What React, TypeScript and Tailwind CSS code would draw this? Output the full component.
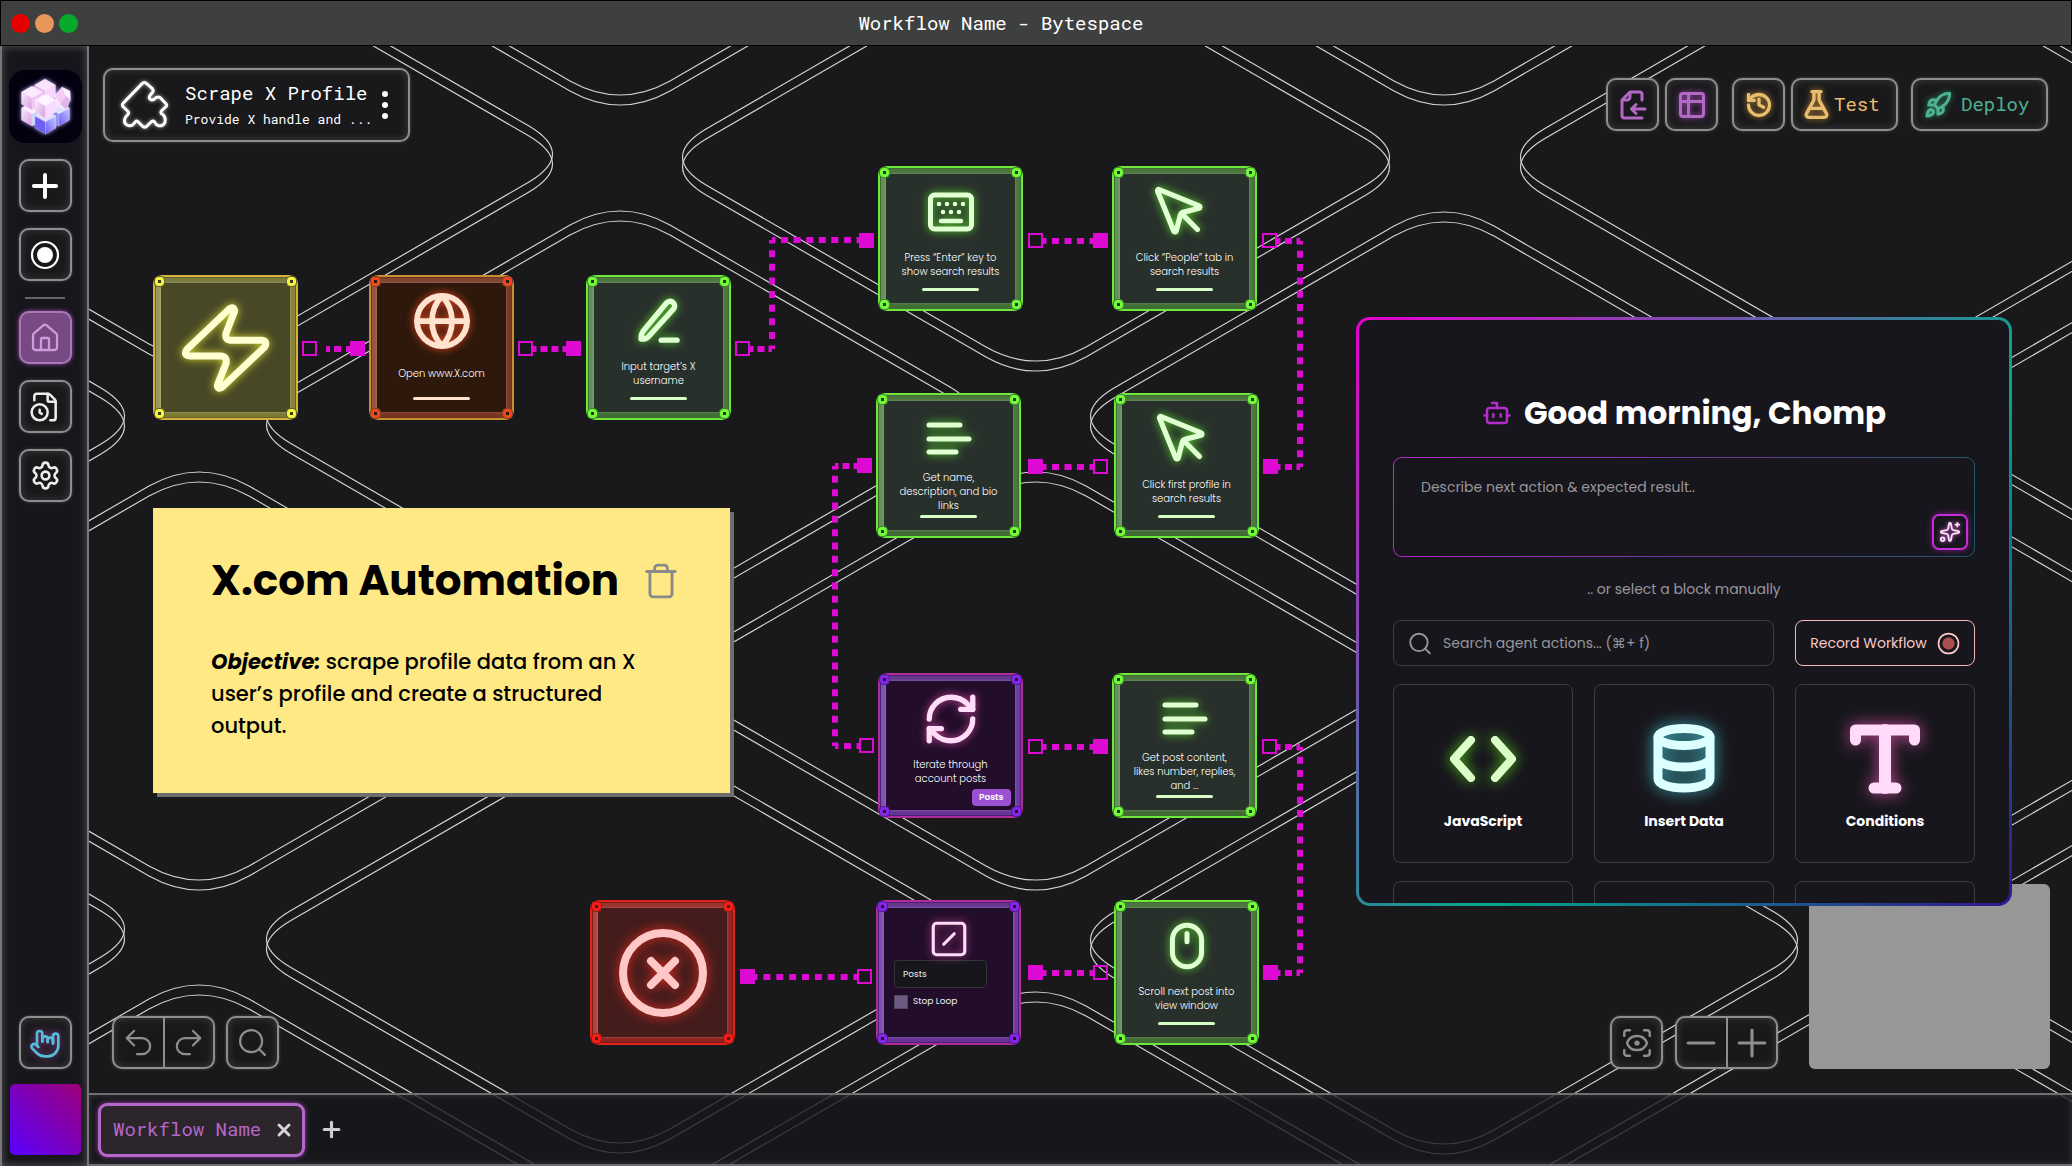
import type { ReactNode } from "react";
import {
  Bot,
  CircleX,
  FileClock,
  FlaskConical,
  Globe,
  HandMetal,
  History,
  House,
  Mouse,
  MousePointer,
  Plus,
  Minus,
  Redo2,
  RefreshCw,
  Rocket,
  ScanEye,
  Search,
  Settings,
  Sparkles,
  SquareSlash,
  Trash,
  Undo2,
  X,
} from "lucide-react";

const MONO = "font-['Roboto_Mono','DejaVu_Sans_Mono',monospace]";
const FRAME =
  "border-2 border-[#8e8e8e] rounded-[10px] bg-[#19191b] shadow-[0_0_3px_rgba(255,255,255,0.25),inset_0_0_8px_rgba(255,255,255,0.16)]";

/* ---------- background pattern ---------- */

const ROUNDED_RHOMBUS =
  "M-50-190Q0-218 50-190L330-28Q377 0 330 28L50 190Q0 218-50 190L-330 28Q-377 0-330-28Z";

const RHOMBI: [number, number][] = [
  [-318, 370], [-318, 883],
  [110, 108], [110, 630], [110, 1143],
  [531, -155], [531, 369], [531, 893],
  [947, 111], [947, 630], [947, 1150],
  [1355, -155], [1355, 370], [1355, 894],
  [1785, 111], [1785, 630], [1785, 1150],
  [2200, 370], [2200, 893],
];

function Backdrop() {
  return (
    <svg className="absolute inset-0 size-full" fill="none" stroke="#d2d2d2" strokeWidth="1.2" aria-hidden="true">
      {RHOMBI.map(([x, y]) => (
        <g key={`${x},${y}`}>
          <path d={ROUNDED_RHOMBUS} transform={`translate(${x} ${y})`} />
          <path d={ROUNDED_RHOMBUS} transform={`translate(${x} ${y + 10})`} />
        </g>
      ))}
    </svg>
  );
}

/* ---------- connectors ---------- */

// x1, y1, x2, y2, number of dash intervals
const SEGMENTS: [number, number, number, number, number][] = [
  [444, 303, 477, 303, 3],
  [661, 303, 683, 303, 2],
  [683, 303, 683, 194, 8],
  [683, 194, 771, 194, 7],
  [954, 195, 1004, 195, 4],
  [1188, 195, 1211, 195, 2],
  [1211, 195, 1211, 421, 17],
  [1211, 421, 1188, 421, 2],
  [954, 421, 1004, 421, 4],
  [768, 420, 746, 420, 2],
  [746, 420, 746, 700, 21],
  [746, 700, 771, 700, 2],
  [954, 701, 1004, 701, 4],
  [1188, 701, 1211, 701, 2],
  [1211, 701, 1211, 927, 17],
  [1211, 927, 1188, 927, 2],
  [954, 927, 1004, 927, 4],
  [665, 931, 768, 931, 8],
];

const PORTS: { x: number; y: number; filled?: boolean }[] = [
  { x: 221, y: 303 }, { x: 269, y: 303, filled: true },
  { x: 437, y: 303 }, { x: 485, y: 303, filled: true },
  { x: 654, y: 303 }, { x: 778, y: 195, filled: true },
  { x: 947, y: 195 }, { x: 1012, y: 195, filled: true },
  { x: 1181, y: 195 }, { x: 1182, y: 421, filled: true },
  { x: 1012, y: 421 }, { x: 947, y: 421, filled: true },
  { x: 776, y: 420, filled: true }, { x: 778, y: 700 },
  { x: 947, y: 701 }, { x: 1012, y: 701, filled: true },
  { x: 1181, y: 701 }, { x: 1182, y: 927, filled: true },
  { x: 1012, y: 927 }, { x: 947, y: 927, filled: true },
  { x: 776, y: 931 }, { x: 659, y: 931, filled: true },
];

function Connectors() {
  return (
    <svg className="absolute inset-0 size-full" fill="none" stroke="#dc0ad2" aria-hidden="true">
      {SEGMENTS.map(([x1, y1, x2, y2, n]) => {
        const pitch = (Math.abs(x2 - x1) + Math.abs(y2 - y1)) / n;
        return (
          <line
            key={`${x1},${y1},${x2},${y2}`}
            x1={x1}
            y1={y1}
            x2={x2}
            y2={y2}
            strokeWidth="6"
            strokeDasharray={`7 ${pitch - 7}`}
            strokeDashoffset="3.5"
          />
        );
      })}
      <path d="M237 303h4M245 303h7M257 303h5" strokeWidth="6" />
      {PORTS.map(({ x, y, filled }) => (
        <rect
          key={`${x},${y}`}
          x={x - 7}
          y={y - 7}
          width="13"
          height="13"
          strokeWidth="2"
          fill={filled ? "#dc0ad2" : "none"}
        />
      ))}
    </svg>
  );
}

/* ---------- workflow nodes ---------- */

type Tone = "yellow" | "orange" | "green" | "purple" | "red";

const TONES: Record<Tone, { edge: string; bevel: string; face: string; rivet: string; icon: string; bar: string }> = {
  yellow: {
    edge: "border-[#d6b23c] bg-[#66642c]",
    bevel: "border-t-[#7c7b3f] border-r-[#85843c] border-b-[#7c7b35] border-l-[#9a995c]",
    face: "bg-[#484826]",
    rivet: "border-[#f6f542] bg-[#3c3c1e] outline-[#66642c]",
    icon: "text-[#ffffd2] drop-shadow-[0_0_4px_#d8d832]",
    bar: "bg-[#ffffd2]",
  },
  orange: {
    edge: "border-[#c98f2d] bg-[#6b3322]",
    bevel: "border-t-[#7f4532] border-r-[#7a3826] border-b-[#7a3521] border-l-[#96553f]",
    face: "bg-[#2d180b]",
    rivet: "border-[#ec4a1c] bg-[#2d180b] outline-[#8a3f22]",
    icon: "text-[#ffe3cf] drop-shadow-[0_0_4px_#dd4420]",
    bar: "bg-[#ffe3cf]",
  },
  green: {
    edge: "border-[#6fe83c] bg-[#3f6a33]",
    bevel: "border-t-[#4d7540] border-r-[#4a773c] border-b-[#416d35] border-l-[#649159]",
    face: "bg-[#28302b]",
    rivet: "border-[#72fb3a] bg-[#28302b] outline-[#438a2c]",
    icon: "text-[#e0ffd2] drop-shadow-[0_0_4px_#58d02c]",
    bar: "bg-[#d9ffc8]",
  },
  purple: {
    edge: "border-[#b12a9e] bg-[#4c2270]",
    bevel: "border-t-[#66388d] border-r-[#6f3aa6] border-b-[#653494] border-l-[#8250b4]",
    face: "bg-[#220d2a]",
    rivet: "border-[#8426e8] bg-[#220d2a] outline-[#4f1c96]",
    icon: "text-[#ffdcf8] drop-shadow-[0_0_4px_#c04596]",
    bar: "bg-[#ffdcf8]",
  },
  red: {
    edge: "border-[#e3231c] bg-[#7a1d1a]",
    bevel: "border-t-[#9b332e] border-r-[#932621] border-b-[#8e241f] border-l-[#b3443e]",
    face: "bg-[#441c1b]",
    rivet: "border-[#f51f18] bg-[#441c1b] outline-[#991c18]",
    icon: "text-[#ffc8c6] drop-shadow-[0_0_6px_#e02a22]",
    bar: "bg-[#ffc8c6]",
  },
};

function Node({ tone, place, children }: { tone: Tone; place: string; children: ReactNode }) {
  const t = TONES[tone];
  const rivet = `absolute size-[9px] rounded-[3px] border-[3px] outline-1 ${t.rivet}`;
  return (
    <article className={`absolute size-[145px] rounded-[9px] border-2 p-px ${t.edge} ${place}`}>
      <div className={`size-full rounded-[6px] border-[5px] ${t.bevel}`}>
        <div className={`size-full rounded-[3px] shadow-[0_0_2px_1px_rgba(255,255,255,0.14)] ${t.face}`} />
      </div>
      <span className={`${rivet} top-0 left-0`} />
      <span className={`${rivet} top-0 right-0`} />
      <span className={`${rivet} bottom-0 left-0`} />
      <span className={`${rivet} right-0 bottom-0`} />
      <div className="absolute inset-0 flex flex-col items-center">{children}</div>
    </article>
  );
}

function Step({ tone, place, icon, lines, bar = true }: { tone: Tone; place: string; icon: ReactNode; lines: string[]; bar?: boolean }) {
  const t = TONES[tone];
  return (
    <Node tone={tone} place={place}>
      <div className={`mt-[14px] flex h-[60px] items-center justify-center ${t.icon}`}>{icon}</div>
      <p className="flex h-[46px] flex-col justify-center text-center text-[10px] leading-[14px] font-light whitespace-nowrap text-white">
        {lines.map((line) => (
          <span key={line}>{line}</span>
        ))}
      </p>
      {bar && <span className={`h-[3px] w-[57px] rounded-full ${t.bar}`} />}
    </Node>
  );
}

function BoltIcon() {
  return (
    <svg width="98" height="98" viewBox="530 894 294 294" fill="none" stroke="currentColor" strokeWidth="21" strokeLinejoin="round">
      <path d="M686 925L560 1045Q547 1063 569 1065L662 1065Q681 1067 677 1088L651 1153Q652 1167 666 1158L793 1038Q803 1020 784 1018L690 1018Q673 1016 677 997L703 930Q700 914 686 925Z" />
    </svg>
  );
}

function CursorIcon() {
  return <MousePointer size={60} strokeWidth={2.100} className="mr-[9px]" />;
}

function KeyboardIcon() {
  return (
    <svg width="48" height="42" viewBox="0 0 48 42" fill="none" stroke="currentColor" strokeLinecap="round">
      <rect x="3.5" y="4" width="41" height="34" rx="4" strokeWidth="5" />
      <path d="M12 13h.01M20 13h.01M28 13h.01M36 13h.01M16 21h.01M24 21h.01M32 21h.01" strokeWidth="4.600" />
      <path d="M14 30h20" strokeWidth="4.500" />
    </svg>
  );
}

function LinesIcon() {
  return (
    <svg width="48" height="36" viewBox="0 0 48 36" stroke="currentColor" strokeWidth="5" strokeLinecap="round">
      <path d="M4 4h31M4 18h40M4 31h27" />
    </svg>
  );
}

function PenIcon() {
  return (
    <svg width="54" height="54" viewBox="0 0 24 24" fill="none" stroke="currentColor" strokeWidth="2.400" strokeLinecap="round" strokeLinejoin="round">
      <path d="M13 20.500h7M15.300 4a2 2 0 0 1 3.200 2.600L7.500 18.800c-1 1-2.200 1.400-3.500 1.200 0-1.500.3-2.600 1-3.600Z" />
    </svg>
  );
}

/* ---------- drawings for bars ---------- */

function PuzzleIcon() {
  return (
    <svg width="54" height="54" viewBox="350 232 162 162" fill="none" stroke="#fff" strokeWidth="9" strokeLinejoin="round" className="drop-shadow-[0_0_2px_rgba(255,255,255,0.6)]">
      <path d="M438 248L456 264Q461 270 456 276Q445 287 447 293Q452 300 460 297L468 290Q474 287 480 291L497 309Q501 314 497 318L484 330Q479 336 485 340Q497 346 494 365Q488 378 474 375Q468 373 462 363Q457 358 452 364L439 377Q433 382 427 377L414 364Q408 358 404 365Q396 378 384 375Q370 371 373 356Q375 348 383 341Q387 336 382 331L368 318Q364 313 368 308L426 248Q432 243 438 248Z" />
    </svg>
  );
}

function Cube({ x, y, top, left, right }: { x: number; y: number; top: string; left: string; right: string }) {
  return (
    <g stroke="#fff" strokeOpacity="0.5" strokeWidth="0.4">
      <path d={`M${x} ${y - 6}l10.500 6l-10.500 6l-10.500-6z`} fill={top} />
      <path d={`M${x - 10.5} ${y}l10.500 6v12l-10.500-6z`} fill={left} />
      <path d={`M${x + 10.5} ${y}l-10.500 6v12l10.500-6z`} fill={right} />
    </g>
  );
}

function Logo() {
  return (
    <svg width="73" height="73" viewBox="0 0 73 73" className="drop-shadow-[0_0_2px_#b7a8ff]" aria-hidden="true">
      <defs>
        <linearGradient id="pinkFace" x1="0" y1="0" x2="1" y2="1">
          <stop offset="0" stopColor="#fdeaff" />
          <stop offset="1" stopColor="#d79be0" />
        </linearGradient>
        <linearGradient id="blueFace" x1="0" y1="1" x2="1" y2="0">
          <stop offset="0" stopColor="#6b5cf2" />
          <stop offset="1" stopColor="#c5cbff" />
        </linearGradient>
      </defs>
      <Cube x={50} y={38} top="#dfe2ff" left="#8e8df4" right="url(#blueFace)" />
      <Cube x={23} y={38} top="#fff0ff" left="url(#pinkFace)" right="#c9d4ff" />
      <Cube x={36} y={15} top="#fbe3fd" left="#e9b4ee" right="#f7d6fb" />
      <g stroke="#fff" strokeOpacity="0.6" strokeWidth="0.4">
        <path d="M53 17l-7 8 5 9 6-8z" fill="#f3cdf6" />
        <path d="M53 17l8 4 .5 9-4.500-4z" fill="#fdf0ff" />
        <path d="M57 26l4.500 4-4.500 10-6-6z" fill="#e3b4ea" />
        <path d="M46 25l5 9 6 6-10-4z" fill="#fae2fb" />
      </g>
      <Cube x={23} y={22} top="#fdeaff" left="url(#pinkFace)" right="#f0c6f5" />
      <Cube x={36.500} y={46} top="#e3ddff" left="#6e5ff5" right="url(#blueFace)" />
      <Cube x={36.500} y={30} top="#fff3ff" left="url(#pinkFace)" right="#f8daff" />
    </svg>
  );
}

function ImportFileIcon() {
  return (
    <svg width="28" height="30" viewBox="0 0 28 30" fill="none" stroke="currentColor" strokeWidth="3" strokeLinecap="round" strokeLinejoin="round">
      <path d="M23 10V4.500A2.500 2.500 0 0 0 20.500 2H11L3 10v15.500A2.500 2.500 0 0 0 5.500 28H23" />
      <path d="M11 2.500V7a3 3 0 0 1-3 3H3.500M26 19H13M17 14.500L12.500 19l4.500 4.500" />
    </svg>
  );
}

function TableIcon() {
  return (
    <svg width="28" height="28" viewBox="0 0 28 28" fill="none" stroke="currentColor" strokeWidth="3">
      <rect x="2.500" y="2.500" width="23" height="23" rx="2.500" />
      <path d="M2.500 10.500h23M10.500 2.500v23" />
    </svg>
  );
}

function RecordIcon({ size, inner }: { size: number; inner: string }) {
  return (
    <svg width={size} height={size} viewBox="0 0 30 30" fill="none" stroke="currentColor" strokeWidth="2.200" aria-hidden="true">
      <circle cx="15" cy="15" r="13" />
      <circle cx="15" cy="15" r="8" fill={inner} stroke="none" />
    </svg>
  );
}

function IconButton({ label, tone = "text-white", children }: { label: string; tone?: string; children: ReactNode }) {
  return (
    <button type="button" aria-label={label} className={`flex size-[53px] shrink-0 items-center justify-center ${FRAME} ${tone}`}>
      {children}
    </button>
  );
}

/* ---------- page regions ---------- */

function TitleBar() {
  return (
    <header className="relative flex h-[46px] shrink-0 items-center justify-center border border-black bg-[#3e403f] pr-[70px]">
      <div className="absolute left-[10px] flex gap-[5px]">
        <button type="button" aria-label="Close window" className="size-[19px] rounded-full bg-[#e80000]" />
        <button type="button" aria-label="Minimize window" className="size-[19px] rounded-full bg-[#e8965a]" />
        <button type="button" aria-label="Maximize window" className="size-[19px] rounded-full bg-[#08aa2c]" />
      </div>
      <h1 className={`${MONO} text-[19px] text-white`}>Workflow Name - Bytespace</h1>
    </header>
  );
}

function Sidebar() {
  return (
    <aside className="flex w-[89px] shrink-0 flex-col items-center border-x-2 border-[#77777a] bg-[#17161c] pt-6 pb-[11px] pl-px shadow-[inset_0_0_8px_rgba(255,255,255,0.28)]">
      <div className="rounded-2xl bg-[#03010f]">
        <Logo />
      </div>
      <nav aria-label="Main" className="mt-4 flex flex-col items-center gap-4">
        <IconButton label="Add">
          <Plus size={38} strokeWidth={2.500} />
        </IconButton>
        <IconButton label="Record">
          <RecordIcon size={30} inner="#fff" />
        </IconButton>
        <hr className="-mb-1 w-10 border-t-2 border-[#66666a]" />
        <button
          type="button"
          aria-label="Home"
          className="flex size-[53px] items-center justify-center rounded-[10px] border-2 border-[#a877b4] bg-[#784a85] text-[#d09adb] shadow-[0_0_4px_#a04fb4]"
        >
          <House size={32} strokeWidth={1.700} />
        </button>
        <IconButton label="Scheduled files" tone="text-[#ededed]">
          <FileClock size={32} strokeWidth={1.900} />
        </IconButton>
        <IconButton label="Settings" tone="text-[#ededed]">
          <Settings size={31} strokeWidth={2} />
        </IconButton>
      </nav>
      <div className="mt-auto flex flex-col items-center gap-[15px]">
        <IconButton label="Pan" tone="text-[#55bdd6]">
          <HandMetal size={32} strokeWidth={2} className="drop-shadow-[0_0_4px_#8a3fa0]" />
        </IconButton>
        <button type="button" aria-label="Account" className="size-[71px] rounded-[5px] bg-linear-[45deg,#5a00ff,#9c0078]" />
      </div>
    </aside>
  );
}

function InfoCard() {
  return (
    <section className={`absolute top-[22px] left-[14px] flex h-[74px] w-[307px] items-center px-5 pl-3 ${FRAME} ${MONO}`}>
      <PuzzleIcon />
      <div className="ml-[14px] text-white">
        <h2 className="text-[19px] leading-7 whitespace-nowrap">Scrape X Profile</h2>
        <p className="text-[13px] leading-6 whitespace-nowrap">Provide X handle and ...</p>
      </div>
      <button type="button" aria-label="More" className="ml-auto flex flex-col gap-[5px]">
        <span className="size-[6px] rounded-full bg-white" />
        <span className="size-[6px] rounded-full bg-white" />
        <span className="size-[6px] rounded-full bg-white" />
      </button>
    </section>
  );
}

function TopActions() {
  return (
    <div className={`absolute top-[32px] right-6 flex text-[19px] ${MONO}`}>
      <div className="flex gap-[6px]">
        <IconButton label="Import file" tone="text-[#b368c6]">
          <ImportFileIcon />
        </IconButton>
        <IconButton label="Table view" tone="text-[#b368c6]">
          <span className="drop-shadow-[0_0_3px_#9a45b0]">
            <TableIcon />
          </span>
        </IconButton>
      </div>
      <div className="mr-[13px] ml-[14px] flex gap-[6px] text-[#e9bd6f]">
        <IconButton label="History" tone="text-[#e9bd6f]">
          <History size={28} strokeWidth={2.800} className="drop-shadow-[0_0_3px_#b8873a]" />
        </IconButton>
        <button type="button" className={`flex h-[53px] w-[107px] items-center gap-[2px] pl-2 ${FRAME}`}>
          <FlaskConical size={31} strokeWidth={2.600} className="drop-shadow-[0_0_3px_#b8873a]" />
          Test
        </button>
      </div>
      <button type="button" className={`flex h-[53px] w-[137px] items-center gap-[9px] pl-[11px] text-[#4db292] ${FRAME}`}>
        <Rocket size={28} strokeWidth={2.600} className="drop-shadow-[0_0_3px_#2c7e62]" />
        Deploy
      </button>
    </div>
  );
}

function StickyNote() {
  return (
    <section className="absolute top-[462px] left-[64px] h-[285px] w-[577px] bg-[#ffe985] px-[58px] pt-[45px] text-black shadow-[4px_4px_0_#6e6e6e]">
      <div className="flex items-center justify-between">
        <h2 className="text-[42px] leading-[56px] font-bold whitespace-nowrap">X.com Automation</h2>
        <button type="button" aria-label="Delete note" className="-mr-2 text-[#8a8a8a]">
          <Trash size={38} strokeWidth={1.800} />
        </button>
      </div>
      <p className="mt-[37px] w-[440px] text-[21px] leading-8 font-medium">
        <em className="font-bold">Objective:</em> scrape profile data from an X user’s profile and create a structured output.
      </p>
    </section>
  );
}

function LoopNode() {
  return (
    <Node tone="purple" place="top-[854px] left-[787px]">
      <SquareSlash size={42} strokeWidth={1.800} className="mt-4 text-[#ffdcf8] drop-shadow-[0_0_4px_#c04596]" />
      <form className="w-full pl-4">
        <input
          type="text"
          aria-label="Loop list"
          defaultValue="Posts"
          className="block h-[28px] w-[93px] rounded-[4px] border border-[#37333c] bg-[#17161c] px-2 text-[9px] text-[#ececec]"
        />
        <label className="mt-[7px] flex items-center gap-[5px] text-[9px] text-[#ececec]">
          <input type="checkbox" className="size-[14px] appearance-none border border-[#51485f] bg-[#6b5c80]" />
          Stop Loop
        </label>
      </form>
    </Node>
  );
}

function Nodes() {
  return (
    <>
      <Node tone="yellow" place="top-[229px] left-[64px]">
        <span className={`my-auto ${TONES.yellow.icon}`}>
          <BoltIcon />
        </span>
      </Node>
      <Step tone="orange" place="top-[229px] left-[280px]" icon={<Globe size={60} strokeWidth={2.300} />} lines={["Open www.X.com"]} />
      <Step tone="green" place="top-[229px] left-[497px]" icon={<PenIcon />} lines={["Input target’s X", "username"]} />
      <Step tone="green" place="top-[120px] left-[789px]" icon={<KeyboardIcon />} lines={["Press “Enter” key to", "show search results"]} />
      <Step tone="green" place="top-[120px] left-[1023px]" icon={<CursorIcon />} lines={["Click “People” tab in", "search results"]} />
      <Step tone="green" place="top-[347px] left-[787px]" icon={<LinesIcon />} lines={["Get name,", "description, and bio", "links"]} />
      <Step tone="green" place="top-[347px] left-[1025px]" icon={<CursorIcon />} lines={["Click first profile in", "search results"]} />
      <Step tone="purple" place="top-[627px] left-[789px]" icon={<RefreshCw size={58} strokeWidth={2.200} />} lines={["Iterate through", "account posts"]} bar={false} />
      <span className="absolute top-[743px] left-[883px] rounded-[4px] bg-[#9c50d2] px-[7px] text-[9px] leading-[17px] font-semibold text-white">Posts</span>
      <Step tone="green" place="top-[627px] left-[1023px]" icon={<LinesIcon />} lines={["Get post content,", "likes number, replies,", "and ..."]} />
      <LoopNode />
      <Step tone="green" place="top-[854px] left-[1025px]" icon={<Mouse size={50} strokeWidth={2.400} />} lines={["Scroll next post into", "view window"]} />
      <Node tone="red" place="top-[854px] left-[501px]">
        <CircleX size={96} strokeWidth={2} className={`my-auto ${TONES.red.icon}`} />
      </Node>
    </>
  );
}

function CodeIcon() {
  return (
    <svg width="72" height="72" viewBox="0 0 72 72" fill="none" stroke="currentColor" strokeWidth="8" strokeLinecap="round" strokeLinejoin="round">
      <path d="M24 17L7 36l17 19M48 17l17 19-17 19" />
    </svg>
  );
}

function DatabaseIcon() {
  return (
    <svg width="72" height="72" viewBox="0 0 72 72" fill="none" stroke="currentColor" strokeWidth="9" strokeLinecap="round">
      <ellipse cx="36" cy="14" rx="26" ry="8.500" />
      <path d="M10 14v42c0 5 11 9 26 9s26-4 26-9V14M10 35c0 5 11 9 26 9s26-4 26-9" />
    </svg>
  );
}

function TypeIcon() {
  return (
    <svg width="72" height="72" viewBox="0 0 72 72" fill="none" stroke="currentColor" strokeWidth="11" strokeLinecap="round" strokeLinejoin="round">
      <path d="M6.500 17V7h59v10" strokeWidth="11" />
      <path d="M36 7v58" strokeWidth="12" />
      <path d="M25 65h22" />
    </svg>
  );
}

const BLOCKS = [
  { name: "JavaScript", icon: <CodeIcon />, tone: "text-[#dcffca] drop-shadow-[0_0_7px_#55c41f]" },
  { name: "Insert Data", icon: <DatabaseIcon />, tone: "text-[#dcffff] drop-shadow-[0_0_8px_#3fa9b5]" },
  { name: "Conditions", icon: <TypeIcon />, tone: "text-[#ffdaf9] drop-shadow-[0_0_8px_#c24a96]" },
];

const CARD = "rounded-[8px] border border-[#3d3c41]";

function ActionPanel() {
  return (
    <section className="absolute top-[271px] right-[60px] h-[589px] w-[656px] rounded-[14px] bg-linear-[135deg,#e800cf_0%,#03a78d_58%,#31168e_100%] p-[3px]">
      <div className="flex h-full flex-col overflow-hidden rounded-[11px] bg-[#17161c] px-[34px] pt-[68px]">
        <h2 className="flex items-center justify-center gap-3 text-[31px] leading-[50px] font-bold text-white">
          <Bot size={30} strokeWidth={2} className="text-[#b62ccb]" />
          Good morning, Chomp
        </h2>
        <div className="relative mt-[19px] shrink-0 rounded-[9px] bg-linear-[100deg,#b62ccb,#6a3a94_55%,#1b5765] p-px">
          <textarea
            aria-label="Next action"
            placeholder="Describe next action & expected result.."
            className="block h-[98px] w-full resize-none rounded-[8px] bg-[#17161c] px-[27px] pt-[19px] text-[14px] text-white placeholder:text-[#98979c]"
          />
          <button
            type="button"
            aria-label="Generate"
            className="absolute right-[7px] bottom-[7px] flex size-9 items-center justify-center rounded-[7px] border-2 border-[#c42fd6] bg-[#17161c] text-[#ffe0fb] shadow-[0_0_6px_#7a1c86]"
          >
            <Sparkles size={22} strokeWidth={2} className="drop-shadow-[0_0_2px_#d060d8]" />
          </button>
        </div>
        <p className="pt-5 pb-[19px] text-center text-[14px] leading-6 text-[#98979c]">.. or select a block manually</p>
        <div className="grid grid-cols-3 gap-x-[21px] gap-y-[18px]">
          <label className={`col-span-2 flex h-[46px] items-center gap-[10px] px-[13px] text-[#98979c] ${CARD}`}>
            <Search size={29} strokeWidth={1.700} />
            <input
              type="text"
              aria-label="Search agent actions"
              placeholder="Search agent actions... (⌘+ f)"
              className="w-full bg-transparent text-[14px] text-white placeholder:text-[#98979c]"
            />
          </label>
          <button type="button" className="flex h-[46px] items-center justify-center gap-[10px] rounded-[8px] border border-[#f2b9b4] text-[14px] text-[#f9c9c5]">
            Record Workflow
            <RecordIcon size={23} inner="#a9504d" />
          </button>
          {BLOCKS.map(({ name, icon, tone }) => (
            <button key={name} type="button" className={`flex h-[179px] flex-col items-center pt-[38px] text-[14px] font-bold text-white ${CARD}`}>
              <span className={tone}>{icon}</span>
              <span className="mt-4">{name}</span>
            </button>
          ))}
          <div className={`h-[179px] ${CARD}`} />
          <div className={`h-[179px] ${CARD}`} />
          <div className={`h-[179px] ${CARD}`} />
        </div>
      </div>
    </section>
  );
}

function SplitControl({ first, second }: { first: { label: string; icon: ReactNode }; second: { label: string; icon: ReactNode } }) {
  return (
    <div className={`flex h-[53px] w-[103px] text-[#8e8e8e] ${FRAME}`}>
      <button type="button" aria-label={first.label} className="flex flex-1 items-center justify-center border-r-2 border-[#8e8e8e]">
        {first.icon}
      </button>
      <button type="button" aria-label={second.label} className="flex flex-1 items-center justify-center">
        {second.icon}
      </button>
    </div>
  );
}

function CanvasControls() {
  return (
    <>
      <div className="absolute bottom-6 left-[23px] flex gap-[11px]">
        <SplitControl
          first={{ label: "Undo", icon: <Undo2 size={35} strokeWidth={1.500} /> }}
          second={{ label: "Redo", icon: <Redo2 size={35} strokeWidth={1.500} /> }}
        />
        <IconButton label="Search canvas" tone="text-[#8e8e8e]">
          <Search size={33} strokeWidth={1.600} />
        </IconButton>
      </div>
      <div className="absolute right-[22px] bottom-6 flex items-end">
        <IconButton label="Fit view" tone="text-[#8e8e8e]">
          <ScanEye size={34} strokeWidth={1.700} />
        </IconButton>
        <div className="mr-[31px] ml-3">
          <SplitControl
            first={{ label: "Zoom out", icon: <Minus size={44} strokeWidth={1.700} /> }}
            second={{ label: "Zoom in", icon: <Plus size={44} strokeWidth={1.700} /> }}
          />
        </div>
        <div className="h-[185px] w-[241px] rounded-[6px] bg-[#979797]" />
      </div>
    </>
  );
}

function TabBar() {
  return (
    <footer className="relative flex h-[73px] shrink-0 items-center border-y-2 border-[#6f6f72] bg-[#17161c]/80 pl-[9px] shadow-[inset_0_0_6px_rgba(255,255,255,0.14)]">
      <div className={`flex h-[54px] w-[207px] items-center justify-between rounded-[9px] border-[3px] border-[#b468c8] bg-[#2c252c] pr-2 pl-3 shadow-[0_0_5px_#8f3fa6] ${MONO}`}>
        <button type="button" className="text-[19px] whitespace-nowrap text-[#b468c8]">
          Workflow Name
        </button>
        <button type="button" aria-label="Close tab" className="text-[#d4d4d4]">
          <X size={20} strokeWidth={3.500} />
        </button>
      </div>
      <button type="button" aria-label="New tab" className="ml-[14px] text-[#cfcfcf]">
        <Plus size={25} strokeWidth={3} />
      </button>
    </footer>
  );
}

export default function App() {
  return (
    <div className="flex h-screen flex-col overflow-hidden bg-[#19191b] font-[Poppins,Inter,sans-serif]">
      <TitleBar />
      <div className="flex min-h-0 flex-1">
        <Sidebar />
        <main className="relative flex min-w-0 flex-1 flex-col overflow-hidden">
          <Backdrop />
          <div className="relative min-h-0 flex-1">
            <Connectors />
            <Nodes />
            <StickyNote />
            <InfoCard />
            <TopActions />
            <CanvasControls />
            <ActionPanel />
          </div>
          <TabBar />
        </main>
      </div>
    </div>
  );
}
